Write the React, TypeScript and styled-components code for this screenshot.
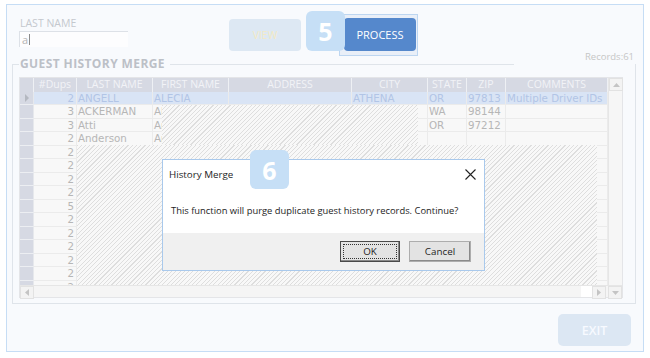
import { createGlobalStyle, styled } from "styled-components";

const GlobalStyle = createGlobalStyle`
  html, body {
    margin: 0;
    padding: 0;
    background: #ffffff;
  }
  * {
    box-sizing: border-box;
  }
`;

interface GuestRow {
  dups: number;
  lastName?: string;
  firstName?: string;
  address?: string;
  city?: string;
  state?: string;
  zip?: string;
  comments?: string;
}

const columns = [
  { key: "dups", label: "#Dups", width: 43, align: "right" },
  { key: "lastName", label: "LAST NAME", width: 76, align: "left" },
  { key: "firstName", label: "FIRST NAME", width: 76, align: "left" },
  { key: "address", label: "ADDRESS", width: 123, align: "left" },
  { key: "city", label: "CITY", width: 76, align: "left" },
  { key: "state", label: "STATE", width: 39, align: "left" },
  { key: "zip", label: "ZIP", width: 39, align: "left" },
  { key: "comments", label: "COMMENTS", width: 102, align: "left" },
] as const;

const rows: GuestRow[] = [
  {
    dups: 2,
    lastName: "ANGELL",
    firstName: "ALECIA",
    city: "ATHENA",
    state: "OR",
    zip: "97813",
    comments: "Multiple Driver IDs",
  },
  { dups: 3, lastName: "ACKERMAN", firstName: "ALAN", state: "WA", zip: "98144" },
  { dups: 3, lastName: "Atti", firstName: "Anna", state: "OR", zip: "97212" },
  { dups: 2, lastName: "Anderson", firstName: "Amy" },
  { dups: 2 },
  { dups: 2 },
  { dups: 2 },
  { dups: 2 },
  { dups: 5 },
  { dups: 2 },
  { dups: 2 },
  { dups: 2 },
  { dups: 2 },
  { dups: 2 },
  { dups: 2 },
];

const gridTemplate = `14px ${columns.map((c) => `${c.width}px`).join(" ")}`;

const App = () => {
  return (
    <>
      <GlobalStyle />
      <Frame>
        <TopBar>
          <FieldBlock>
            <FieldLabel>LAST NAME</FieldLabel>
            <FieldInput>
              a<Caret />
            </FieldInput>
          </FieldBlock>
          <ViewButton>VIEW</ViewButton>
          <StepBadge>5</StepBadge>
          <ProcessOutline>
            <ProcessButton>PROCESS</ProcessButton>
          </ProcessOutline>
          <RecordsLabel>Records:61</RecordsLabel>
        </TopBar>

        <GroupBox>
          <GroupHeader>
            <GroupTick />
            <GroupTitle>GUEST HISTORY MERGE</GroupTitle>
            <GroupLine />
          </GroupHeader>

          <Grid>
            <GridMain>
              <TableArea>
                <HeaderRow>
                  <HeaderCell />
                  {columns.map((col) => (
                    <HeaderCell key={col.key}>{col.label}</HeaderCell>
                  ))}
                </HeaderRow>
                {rows.map((row, index) => (
                  <DataRow key={index} $selected={index === 0}>
                    <RowHeadCell>{index === 0 && <RowMarker />}</RowHeadCell>
                    {columns.map((col) => (
                      <DataCell key={col.key} $align={col.align}>
                        {row[col.key] ?? ""}
                      </DataCell>
                    ))}
                  </DataRow>
                ))}
                <HatchUpper />
                <HatchLower />
              </TableArea>
              <VScroll>
                <ScrollArrow>
                  <svg width="7" height="4" viewBox="0 0 7 4">
                    <path d="M0 4 L3.5 0 L7 4 Z" fill="#c4c4c4" />
                  </svg>
                </ScrollArrow>
              </VScroll>
            </GridMain>
            <HScroll>
              <ScrollArrow>
                <svg width="4" height="7" viewBox="0 0 4 7">
                  <path d="M4 0 L0 3.5 L4 7 Z" fill="#c4c4c4" />
                </svg>
              </ScrollArrow>
              <HTrack />
              <HThumb />
              <ScrollArrow>
                <svg width="4" height="7" viewBox="0 0 4 7">
                  <path d="M0 0 L4 3.5 L0 7 Z" fill="#c4c4c4" />
                </svg>
              </ScrollArrow>
              <ScrollGap />
              <ScrollArrow>
                <svg width="7" height="4" viewBox="0 0 7 4">
                  <path d="M0 0 L3.5 4 L7 0 Z" fill="#c4c4c4" />
                </svg>
              </ScrollArrow>
            </HScroll>
          </Grid>
        </GroupBox>

        <Footer>
          <ExitButton>EXIT</ExitButton>
        </Footer>

        <Dialog>
          <DialogBadge>6</DialogBadge>
          <DialogTitleBar>
            <DialogTitle>History Merge</DialogTitle>
            <CloseIcon width="11" height="11" viewBox="0 0 11 11">
              <path d="M0.5 0.5 L10.5 10.5 M10.5 0.5 L0.5 10.5" stroke="#222" strokeWidth="1.1" />
            </CloseIcon>
          </DialogTitleBar>
          <DialogMessage>
            This function will purge duplicate guest history records. Continue?
          </DialogMessage>
          <DialogButtons>
            <DialogButton $primary>OK</DialogButton>
            <DialogButton>Cancel</DialogButton>
          </DialogButtons>
        </Dialog>
      </Frame>
    </>
  );
};

export default App;

const Frame = styled.div`
  position: relative;
  width: 638px;
  height: 348px;
  margin: 4px 0 0 6px;
  border: 1px solid #c6ddf5;
  background-color: #f8fafd;
  display: flex;
  flex-direction: column;
  font-family: "Open Sans", "Noto Sans", sans-serif;
`;

const TopBar = styled.div`
  height: 57px;
  display: flex;
  align-items: flex-start;
`;

const FieldBlock = styled.div`
  width: 121px;
  padding: 12px 0 0 12px;
  display: flex;
  flex-direction: column;
`;

const FieldLabel = styled.div`
  font-size: 10.5px;
  line-height: 13px;
  color: #c4c8ce;
  padding-left: 1px;
`;

const FieldInput = styled.div`
  margin-top: 1px;
  height: 16px;
  border-top: 1px solid #dde1e7;
  border-left: 1px solid #dde1e7;
  background-color: #fdfdfe;
  font-size: 11px;
  line-height: 15px;
  color: #b4b4b4;
  padding-left: 2px;
  display: flex;
  align-items: center;
`;

const Caret = styled.span`
  display: inline-block;
  width: 1px;
  height: 11px;
  margin-left: 1px;
  background-color: #8a8a8a;
`;

const ViewButton = styled.div`
  margin: 14px 0 0 101px;
  width: 72px;
  height: 32px;
  border-radius: 4px;
  background-color: #dde8f3;
  color: #f3eac4;
  font-size: 10.5px;
  display: flex;
  align-items: center;
  justify-content: center;
`;

const StepBadge = styled.div`
  position: relative;
  z-index: 1;
  margin: 6px -6px 0 5px;
  width: 39px;
  height: 40px;
  border-radius: 6px;
  background-color: #c6dff6;
  color: #ffffff;
  font-size: 25px;
  font-weight: 700;
  display: flex;
  align-items: center;
  justify-content: center;
`;

const ProcessOutline = styled.div`
  margin-top: 9px;
  width: 79px;
  height: 42px;
  border: 1px solid #bdd6f1;
  background-color: #e9eff8;
  display: flex;
  justify-content: flex-end;
  padding: 3px 1px 0 0;
`;

const ProcessButton = styled.div`
  width: 72px;
  height: 33px;
  border-radius: 4px;
  background-color: #5588cc;
  color: #ffffff;
  font-size: 11px;
  display: flex;
  align-items: center;
  justify-content: center;
`;

const RecordsLabel = styled.div`
  margin-left: auto;
  margin-right: 9px;
  align-self: flex-end;
  margin-bottom: -1px;
  font-size: 9.5px;
  line-height: 12px;
  color: #c6c6c6;
`;

const GroupBox = styled.div`
  margin: 2px 7px 0 5px;
  border-left: 1px solid #dfe4ea;
  border-right: 1px solid #dfe4ea;
  border-bottom: 1px solid #dfe4ea;
  padding: 0 12px 5px 6px;
`;

const GroupHeader = styled.div`
  margin: -7px 0 0 -6px;
  height: 14px;
  display: flex;
  align-items: center;
`;

const GroupTick = styled.div`
  width: 6px;
  height: 1px;
  background-color: #dfe4ea;
`;

const GroupTitle = styled.div`
  padding: 0 5px 0 1px;
  font-size: 12px;
  font-weight: 700;
  letter-spacing: 0.4px;
  color: #bcc0c7;
  line-height: 14px;
`;

const GroupLine = styled.div`
  width: 344px;
  height: 1px;
  background-color: #dfe4ea;
`;

const Grid = styled.div`
  margin-top: 6px;
  width: 604px;
  border: 1px solid #e4e5e8;
  background-color: #f8f8f8;
  display: flex;
  flex-direction: column;
`;

const GridMain = styled.div`
  display: flex;
  height: 207px;
`;

const TableArea = styled.div`
  position: relative;
  width: 588px;
  height: 207px;
  overflow: hidden;
  font-family: "DejaVu Sans", Verdana, sans-serif;
`;

const HeaderRow = styled.div`
  display: grid;
  grid-template-columns: ${gridTemplate};
  height: 13.5px;
`;

const HeaderCell = styled.div`
  background-color: #d6d9e3;
  border-right: 1.5px solid #eef0f4;
  color: #f2f3f7;
  font-family: "Open Sans", "Noto Sans", sans-serif;
  font-size: 10.5px;
  line-height: 13.5px;
  text-align: center;
  white-space: nowrap;
  overflow: hidden;
`;

const DataRow = styled.div<{ $selected?: boolean }>`
  display: grid;
  grid-template-columns: ${gridTemplate};
  height: 13.5px;
  background-color: ${({ $selected }) => ($selected ? "#d9e4f5" : "#f8f8f8")};
  color: ${({ $selected }) => ($selected ? "#b2c5e6" : "#b6b6b6")};
`;

const RowHeadCell = styled.div`
  background-color: #d6d9e3;
  border-bottom: 1px solid #eceef2;
  border-right: 1px solid #e6e8ec;
  display: flex;
  align-items: center;
  justify-content: center;
`;

const RowMarker = styled.div`
  width: 0;
  height: 0;
  border-top: 4px solid transparent;
  border-bottom: 4px solid transparent;
  border-left: 4px solid #b4b8c0;
`;

const DataCell = styled.div<{ $align: string }>`
  border-right: 1px solid #ebebeb;
  border-bottom: 1px solid #ebebeb;
  font-size: 10.3px;
  line-height: 12.5px;
  padding: 0 2px 0 1px;
  text-align: ${({ $align }) => $align};
  white-space: nowrap;
  overflow: hidden;
`;

const hatch = `
  position: absolute;
  background-color: #f8f8f8;
  background-image: repeating-linear-gradient(
    135deg,
    #dedede 0px,
    #dedede 0.8px,
    transparent 0.8px,
    transparent 3px
  );
`;

const HatchUpper = styled.div`
  ${hatch}
  left: 142px;
  top: 27px;
  width: 256px;
  height: 40px;
`;

const HatchLower = styled.div`
  ${hatch}
  left: 57px;
  top: 67px;
  width: 520px;
  height: 140px;
`;

const VScroll = styled.div`
  width: 14px;
  background-color: #f6f6f6;
  border-left: 1px solid #e6e6e6;
`;

const ScrollArrow = styled.div`
  width: 14px;
  height: 13px;
  flex-shrink: 0;
  background-color: #f3f3f3;
  border: 1px solid #e2e2e2;
  display: flex;
  align-items: center;
  justify-content: center;
`;

const HScroll = styled.div`
  height: 12px;
  display: flex;
  background-color: #f5f5f5;
  border-top: 1px solid #e6e6e6;
`;

const HTrack = styled.div`
  flex: 1;
`;

const HThumb = styled.div`
  width: 11px;
  background-color: #ffffff;
`;

const ScrollGap = styled.div`
  width: 2px;
`;

const Footer = styled.div`
  display: flex;
  justify-content: flex-end;
  padding: 10px 12px 0 0;
`;

const ExitButton = styled.div`
  width: 73px;
  height: 32px;
  border-radius: 5px;
  background-color: #dce7f3;
  color: #f7faff;
  font-size: 12.5px;
  font-weight: 600;
  display: flex;
  align-items: center;
  justify-content: center;
`;

const Dialog = styled.div`
  position: absolute;
  left: 155px;
  top: 154px;
  width: 323px;
  height: 112px;
  background-color: #ffffff;
  border: 1px solid #a9c9ec;
  display: flex;
  flex-direction: column;
  font-family: "Open Sans", "Noto Sans", sans-serif;
  color: #1e1e1e;
`;

const DialogBadge = styled.div`
  position: absolute;
  left: 87px;
  top: -10px;
  width: 39px;
  height: 39px;
  border-radius: 6px;
  background-color: #c6dff6;
  color: #ffffff;
  font-size: 25px;
  font-weight: 700;
  display: flex;
  align-items: center;
  justify-content: center;
`;

const DialogTitleBar = styled.div`
  height: 28px;
  display: flex;
  align-items: center;
  justify-content: space-between;
  padding: 0 8px 0 6px;
`;

const DialogTitle = styled.div`
  font-size: 9.8px;
`;

const CloseIcon = styled.svg`
  display: block;
`;

const DialogMessage = styled.div`
  height: 45px;
  padding-left: 8px;
  display: flex;
  align-items: center;
  font-size: 9.4px;
`;

const DialogButtons = styled.div`
  flex: 1;
  background-color: #f0f0f0;
  display: flex;
  justify-content: flex-end;
  align-items: flex-start;
  gap: 9px;
  padding: 8px 13px 0 0;
`;

const DialogButton = styled.div<{ $primary?: boolean }>`
  position: relative;
  width: ${({ $primary }) => ($primary ? "60px" : "62px")};
  height: 21px;
  background-color: #e3e3e3;
  border: 1px solid ${({ $primary }) => ($primary ? "#4a4a4a" : "#adadad")};
  box-shadow: inset -1px -1px 0 #8a8a8a;
  font-size: 9.8px;
  display: flex;
  align-items: center;
  justify-content: center;

  &::after {
    content: "";
    display: ${({ $primary }) => ($primary ? "block" : "none")};
    position: absolute;
    inset: 2px;
    border: 1px dotted #333;
  }
`;
